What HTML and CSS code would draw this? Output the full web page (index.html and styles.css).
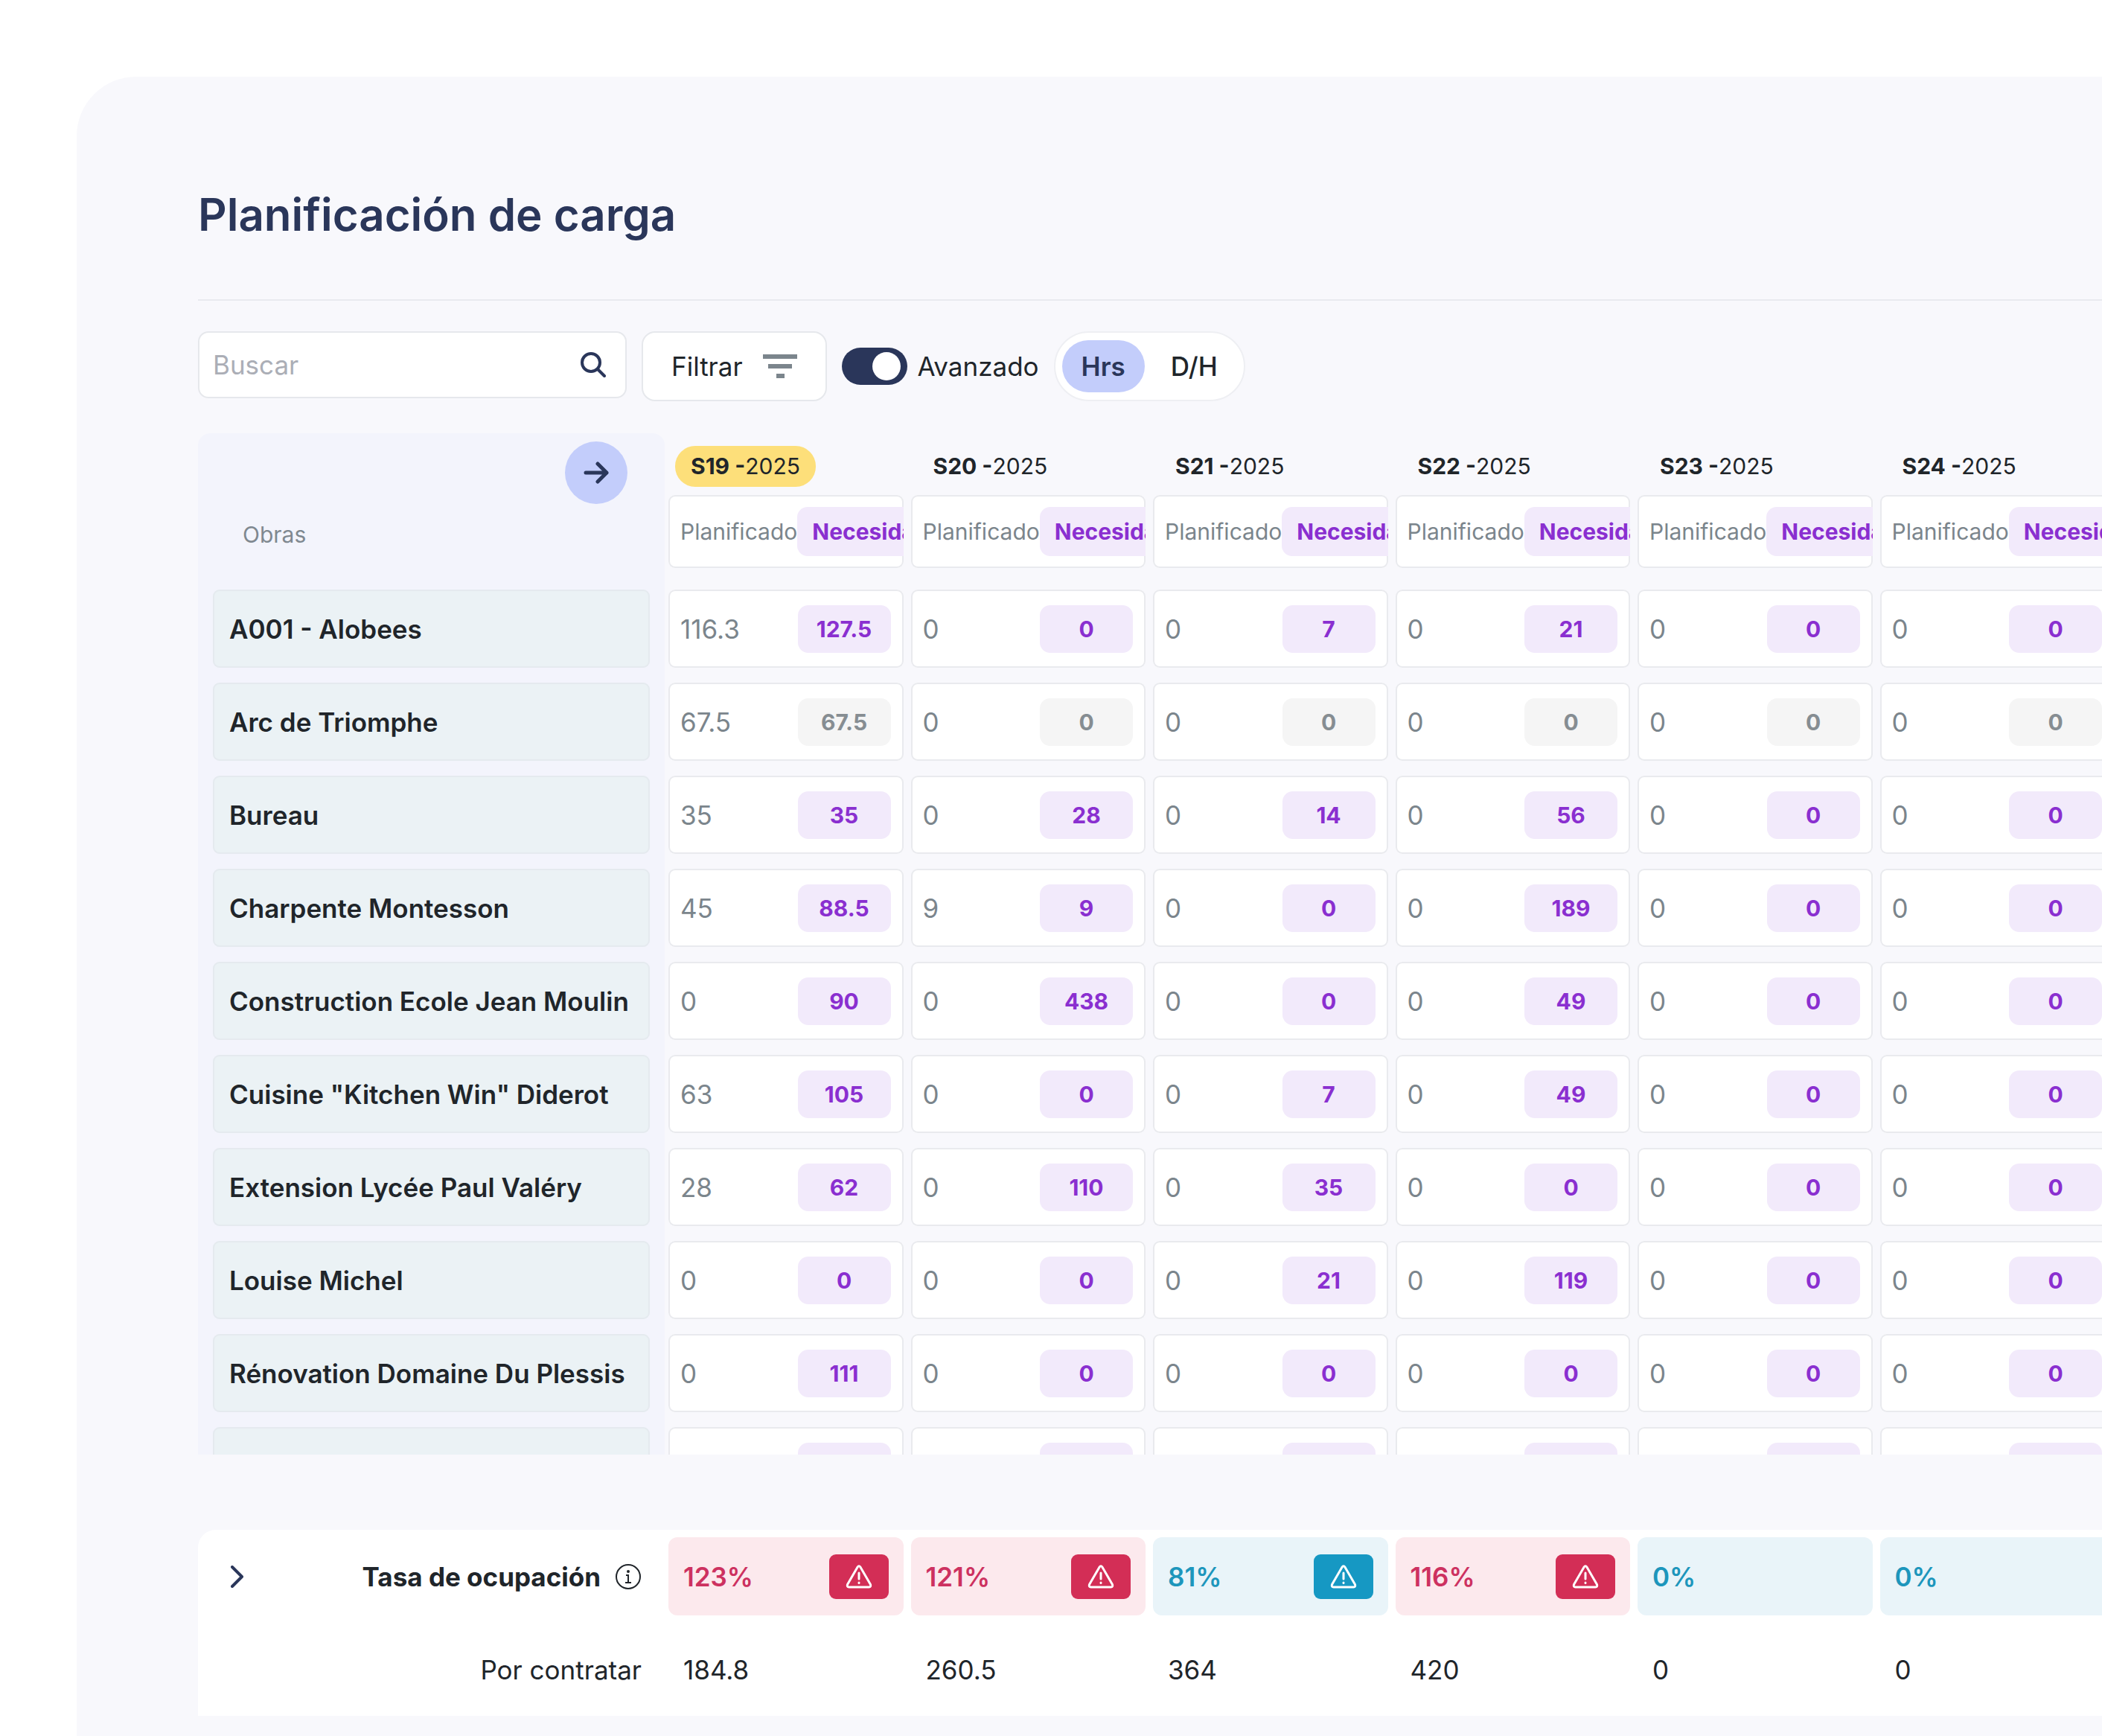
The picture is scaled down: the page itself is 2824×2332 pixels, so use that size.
FILE: index.html
```html
<!DOCTYPE html>
<html lang="es">
<head>
    <meta charset="UTF-8">
    <meta name="viewport" content="width=device-width, initial-scale=1.0">
    <title>Planificación de carga</title>
    <link rel="stylesheet" href="styles.css">
</head>
<body>
    <main class="page">
        <h1 class="title">Planificación de carga</h1>

        <form class="toolbar">
            <div class="search">
                <input type="text" class="search-input" placeholder="Buscar" aria-label="Buscar">
                <button type="button" class="search-btn" aria-label="Buscar">
                    <svg class="icon-search" viewBox="0 0 34 34" fill="none" stroke="currentColor" stroke-width="4" stroke-linecap="round">
                        <circle cx="14" cy="14" r="12"/>
                        <path d="M23 23l9 9"/>
                    </svg>
                </button>
            </div>
            <button type="button" class="filter-btn">
                Filtrar
                <svg class="icon-filter" viewBox="0 0 46 32" fill="currentColor">
                    <path d="M0 0h46v6H0zM7 13h32v6H7zM18 26h11v6H18z"/>
                </svg>
            </button>
            <label class="switch">
                <input type="checkbox" class="switch-input" checked>
                Avanzado
            </label>
            <div class="units">
                <label class="unit"><input type="radio" name="unit" checked><span>Hrs</span></label>
                <label class="unit"><input type="radio" name="unit"><span>D/H</span></label>
            </div>
        </form>

        <div class="scroller">
            <table class="grid">
                <thead>
                    <tr id="weeks">
                        <th class="name-col head">
                            <button type="button" class="next-btn" aria-label="Siguiente">
                                <svg class="icon-arrow" viewBox="0 0 34 30" fill="none" stroke="currentColor" stroke-width="5" stroke-linecap="round" stroke-linejoin="round">
                                    <path d="M3 15h28M19 3l12 12-12 12"/>
                                </svg>
                            </button>
                            <span class="head-label">Obras</span>
                        </th>
                    </tr>
                </thead>
                <tbody id="sites"></tbody>
            </table>
        </div>

        <div class="summary">
            <table class="grid">
                <tbody>
                    <tr id="rates">
                        <th class="total-col rate-label">
                            <button type="button" class="expand-btn" aria-label="Desplegar">
                                <svg class="icon-chevron" viewBox="0 0 18 30" fill="none" stroke="currentColor" stroke-width="4" stroke-linecap="round" stroke-linejoin="round">
                                    <path d="M2 2l13 13L2 28"/>
                                </svg>
                            </button>
                            <span>Tasa de ocupación</span>
                            <svg class="icon-info" viewBox="0 0 36 36" fill="none" stroke="currentColor" stroke-width="2">
                                <circle cx="18" cy="18" r="16"/>
                                <path d="M15 16h3v10M14 26h8"/>
                                <circle cx="18" cy="11" r="1" fill="currentColor"/>
                            </svg>
                        </th>
                    </tr>
                    <tr id="hires">
                        <th class="total-col">Por contratar</th>
                    </tr>
                </tbody>
            </table>
        </div>
    </main>

    <script src="script.js"></script>
</body>
</html>
```

FILE: styles.css
```css
* {
    box-sizing: border-box;
}
body {
    margin: 0;
    background-color: #fff;
    color: #20252a;
    font-family: Inter, "Liberation Sans", sans-serif;
    font-size: 35px;
    line-height: 42px;
    overflow-x: hidden;
}
button, input {
    font: inherit;
    color: inherit;
}
button {
    border: none;
    padding: 0;
    background: none;
    cursor: pointer;
}
svg {
    display: block;
    flex: none;
}
.page {
    min-height: calc(100vh - 103px);
    margin: 103px 0 0 103px;
    padding: 145px 0 27px 163px;
    background-color: #f8f8fc;
    border-top-left-radius: 80px;
    overflow: hidden;
}
.title {
    margin: 0;
    padding-bottom: 74px;
    border-bottom: 2px solid #e9eaef;
    font-size: 60px;
    line-height: 80px;
    font-weight: 600;
    color: #2a365a;
}

/* toolbar */
.toolbar {
    display: flex;
    align-items: center;
    gap: 20px;
    height: 94px;
    margin: 41px 0 43px;
}
.search {
    display: flex;
    align-items: center;
    align-self: flex-start;
    width: 576px;
    height: 90px;
    padding: 0 26px 0 18px;
    border: 2px solid #e6e8ec;
    border-radius: 14px;
    background-color: #fff;
}
.search-input {
    flex: 1;
    min-width: 0;
    padding: 0;
    border: none;
    outline: none;
    background: none;
}
.search-input::placeholder {
    color: #abaeb6;
    opacity: 1;
}
.search-btn {
    color: #2a365a;
}
.icon-search {
    width: 34px;
    height: 34px;
}
.filter-btn {
    display: flex;
    align-items: center;
    gap: 27px;
    height: 94px;
    padding: 0 38px;
    border: 2px solid #e6e8ec;
    border-radius: 18px;
    background-color: #fff;
}
.icon-filter {
    width: 46px;
    height: 32px;
    color: #7b858c;
}
.switch {
    display: flex;
    align-items: center;
    gap: 14px;
}
.switch-input {
    appearance: none;
    display: flex;
    align-items: center;
    width: 88px;
    height: 50px;
    margin: 0;
    padding: 0 9px;
    border-radius: 25px;
    background-color: #c5c9d2;
}
.switch-input::before {
    content: "";
    width: 38px;
    height: 38px;
    border-radius: 50%;
    background-color: #fff;
}
.switch-input:checked {
    justify-content: flex-end;
    background-color: #2a365a;
}
.units {
    display: flex;
    align-items: center;
    height: 94px;
    padding: 0 9px;
    border: 2px solid #eeeff3;
    border-radius: 47px;
    background-color: #fff;
}
.unit input {
    appearance: none;
    position: absolute;
    margin: 0;
}
.unit span {
    display: block;
    padding: 14px 26px;
    border-radius: 35px;
    font-weight: 500;
}
.unit input:checked + span {
    background-color: #c3cdfb;
    color: #2a365a;
    font-weight: 600;
}
.unit + .unit span {
    padding: 14px 26px 14px 35px;
}

/* planning table */
.scroller {
    height: 1372px;
    overflow: hidden;
    border-top-left-radius: 16px;
}
.grid {
    display: block;
    margin-right: -22px;
}
.grid thead,
.grid tbody {
    display: block;
}
.grid tr {
    display: grid;
    grid-template-columns: 627px repeat(6, minmax(0, 1fr));
}
.grid th,
.grid td {
    padding: 10px 5px;
    text-align: left;
}
.grid .name-col {
    padding: 10px 20px;
    background-color: #f3f4fc;
    font-weight: 600;
}
.grid .head {
    display: flex;
    flex-direction: column;
    height: 200px;
    padding: 11px 50px 10px 60px;
    border-radius: 16px 16px 0 0;
}
.next-btn {
    display: flex;
    align-items: center;
    justify-content: center;
    align-self: flex-end;
    width: 84px;
    height: 84px;
    border-radius: 50%;
    background-color: #c3cdfb;
    color: #2a365a;
}
.icon-arrow {
    width: 34px;
    height: 30px;
}
.head-label {
    margin-top: 21px;
    font-size: 30px;
    line-height: 40px;
    font-weight: 400;
    color: #7f8890;
}
.grid .week-col {
    padding: 17px 5px 19px;
    font-size: 30px;
    font-weight: 400;
}
.week {
    display: block;
    width: fit-content;
    margin: 0 0 11px 9px;
    padding: 0 21px;
    border-radius: 27px;
    line-height: 55px;
}
.week b {
    font-weight: 700;
}
.week.current {
    background-color: #fddf7a;
}
.site,
.cell {
    display: flex;
    align-items: center;
    height: 105px;
    border-radius: 9px;
    box-shadow: inset 0 0 0 2px #e9eaee;
}
.site {
    padding: 0 22px;
    background-color: #ebf2f5;
    box-shadow: inset 0 0 0 2px #e5eaef;
    white-space: nowrap;
}
.cell {
    padding: 0 17px 0 16px;
    background-color: #fff;
    color: #7b858c;
    overflow: hidden;
}
.cell.legend {
    height: 98px;
}
.badge {
    flex: none;
    width: 125px;
    margin-left: auto;
    border-radius: 14px;
    background-color: #f2eafb;
    color: #8a2fd0;
    font-size: 30px;
    line-height: 64px;
    font-weight: 700;
    text-align: center;
}
.badge.done {
    background-color: #f5f5f5;
    color: #868d92;
}
.legend .badge {
    width: auto;
    padding: 0 20px;
    line-height: 66px;
}

/* totals */
.summary {
    margin-top: 101px;
    border-top-left-radius: 24px;
    background-color: #fff;
    overflow: hidden;
}
.grid .total-col {
    display: flex;
    align-items: center;
    justify-content: flex-end;
    height: 125px;
    padding: 0 31px 0 44px;
    font-weight: 400;
}
.grid .rate-label {
    gap: 19px;
    font-weight: 700;
}
.expand-btn {
    margin-right: auto;
    color: #2a365a;
}
.icon-chevron {
    width: 18px;
    height: 30px;
}
.icon-info {
    width: 36px;
    height: 36px;
}
.total,
.rate {
    display: flex;
    align-items: center;
    justify-content: space-between;
    height: 105px;
    padding: 0 20px;
}
.rate {
    border-radius: 12px;
    background-color: #e9f4f9;
    color: #1d96bc;
    font-weight: 600;
}
.rate.over {
    background-color: #fce9ed;
    color: #cd3160;
}
.alert {
    display: flex;
    align-items: center;
    justify-content: center;
    width: 80px;
    height: 60px;
    border-radius: 9px;
    background-color: #1698c3;
    color: #fff;
}
.over .alert {
    background-color: #d32e56;
}
.icon-alert {
    width: 36px;
    height: 32px;
}
```

FILE: script.js
```js
const weeks = ['S19', 'S20', 'S21', 'S22', 'S23', 'S24'];

// [planificado, necesidad] per week
const sites = [
    { name: 'A001 - Alobees', hours: [[116.3, 127.5], [0, 0], [0, 7], [0, 21], [0, 0], [0, 0]] },
    { name: 'Arc de Triomphe', done: true, hours: [[67.5, 67.5], [0, 0], [0, 0], [0, 0], [0, 0], [0, 0]] },
    { name: 'Bureau', hours: [[35, 35], [0, 28], [0, 14], [0, 56], [0, 0], [0, 0]] },
    { name: 'Charpente Montesson', hours: [[45, 88.5], [9, 9], [0, 0], [0, 189], [0, 0], [0, 0]] },
    { name: 'Construction Ecole Jean Moulin', hours: [[0, 90], [0, 438], [0, 0], [0, 49], [0, 0], [0, 0]] },
    { name: 'Cuisine "Kitchen Win" Diderot', hours: [[63, 105], [0, 0], [0, 7], [0, 49], [0, 0], [0, 0]] },
    { name: 'Extension Lycée Paul Valéry', hours: [[28, 62], [0, 110], [0, 35], [0, 0], [0, 0], [0, 0]] },
    { name: 'Louise Michel', hours: [[0, 0], [0, 0], [0, 21], [0, 119], [0, 0], [0, 0]] },
    { name: 'Rénovation Domaine Du Plessis', hours: [[0, 111], [0, 0], [0, 0], [0, 0], [0, 0], [0, 0]] },
    { name: '', hours: [['', '\u00a0'], ['', '\u00a0'], ['', '\u00a0'], ['', '\u00a0'], ['', '\u00a0'], ['', '\u00a0']] }
];

const rates = [123, 121, 81, 116, 0, 0];
const hires = [184.8, 260.5, 364, 420, 0, 0];

const alertIcon = `
    <span class="alert">
        <svg class="icon-alert" viewBox="0 0 36 32" fill="none" stroke="currentColor" stroke-width="3" stroke-linecap="round" stroke-linejoin="round">
            <path d="M16 3.200Q18 0.500 20 3.200L33.500 26.500Q34.500 30 31.500 30H4.500Q1.500 30 2.500 26.500Z"/>
            <path d="M18 11v8M18 24v0.500"/>
        </svg>
    </span>`;

document.getElementById('weeks').innerHTML += weeks.map((week, i) => `
    <th class="week-col">
        <span class="week ${i == 0 ? 'current' : ''}"><b>${week} -</b>2025</span>
        <div class="cell legend">Planificado<span class="badge">Necesidad</span></div>
    </th>`).join('');

document.getElementById('sites').innerHTML = sites.map(site => `
    <tr>
        <th class="name-col"><div class="site">${site.name}</div></th>
        ${site.hours.map(([planned, needed]) => `
        <td><div class="cell">${planned}<span class="badge ${site.done ? 'done' : ''}">${needed}</span></div></td>`).join('')}
    </tr>`).join('');

document.getElementById('rates').innerHTML += rates.map(rate => `
    <td><div class="rate ${rate > 100 ? 'over' : ''}">${rate}%${rate > 0 ? alertIcon : ''}</div></td>`).join('');

document.getElementById('hires').innerHTML += hires.map(value => `
    <td><div class="total">${value}</div></td>`).join('');
```
